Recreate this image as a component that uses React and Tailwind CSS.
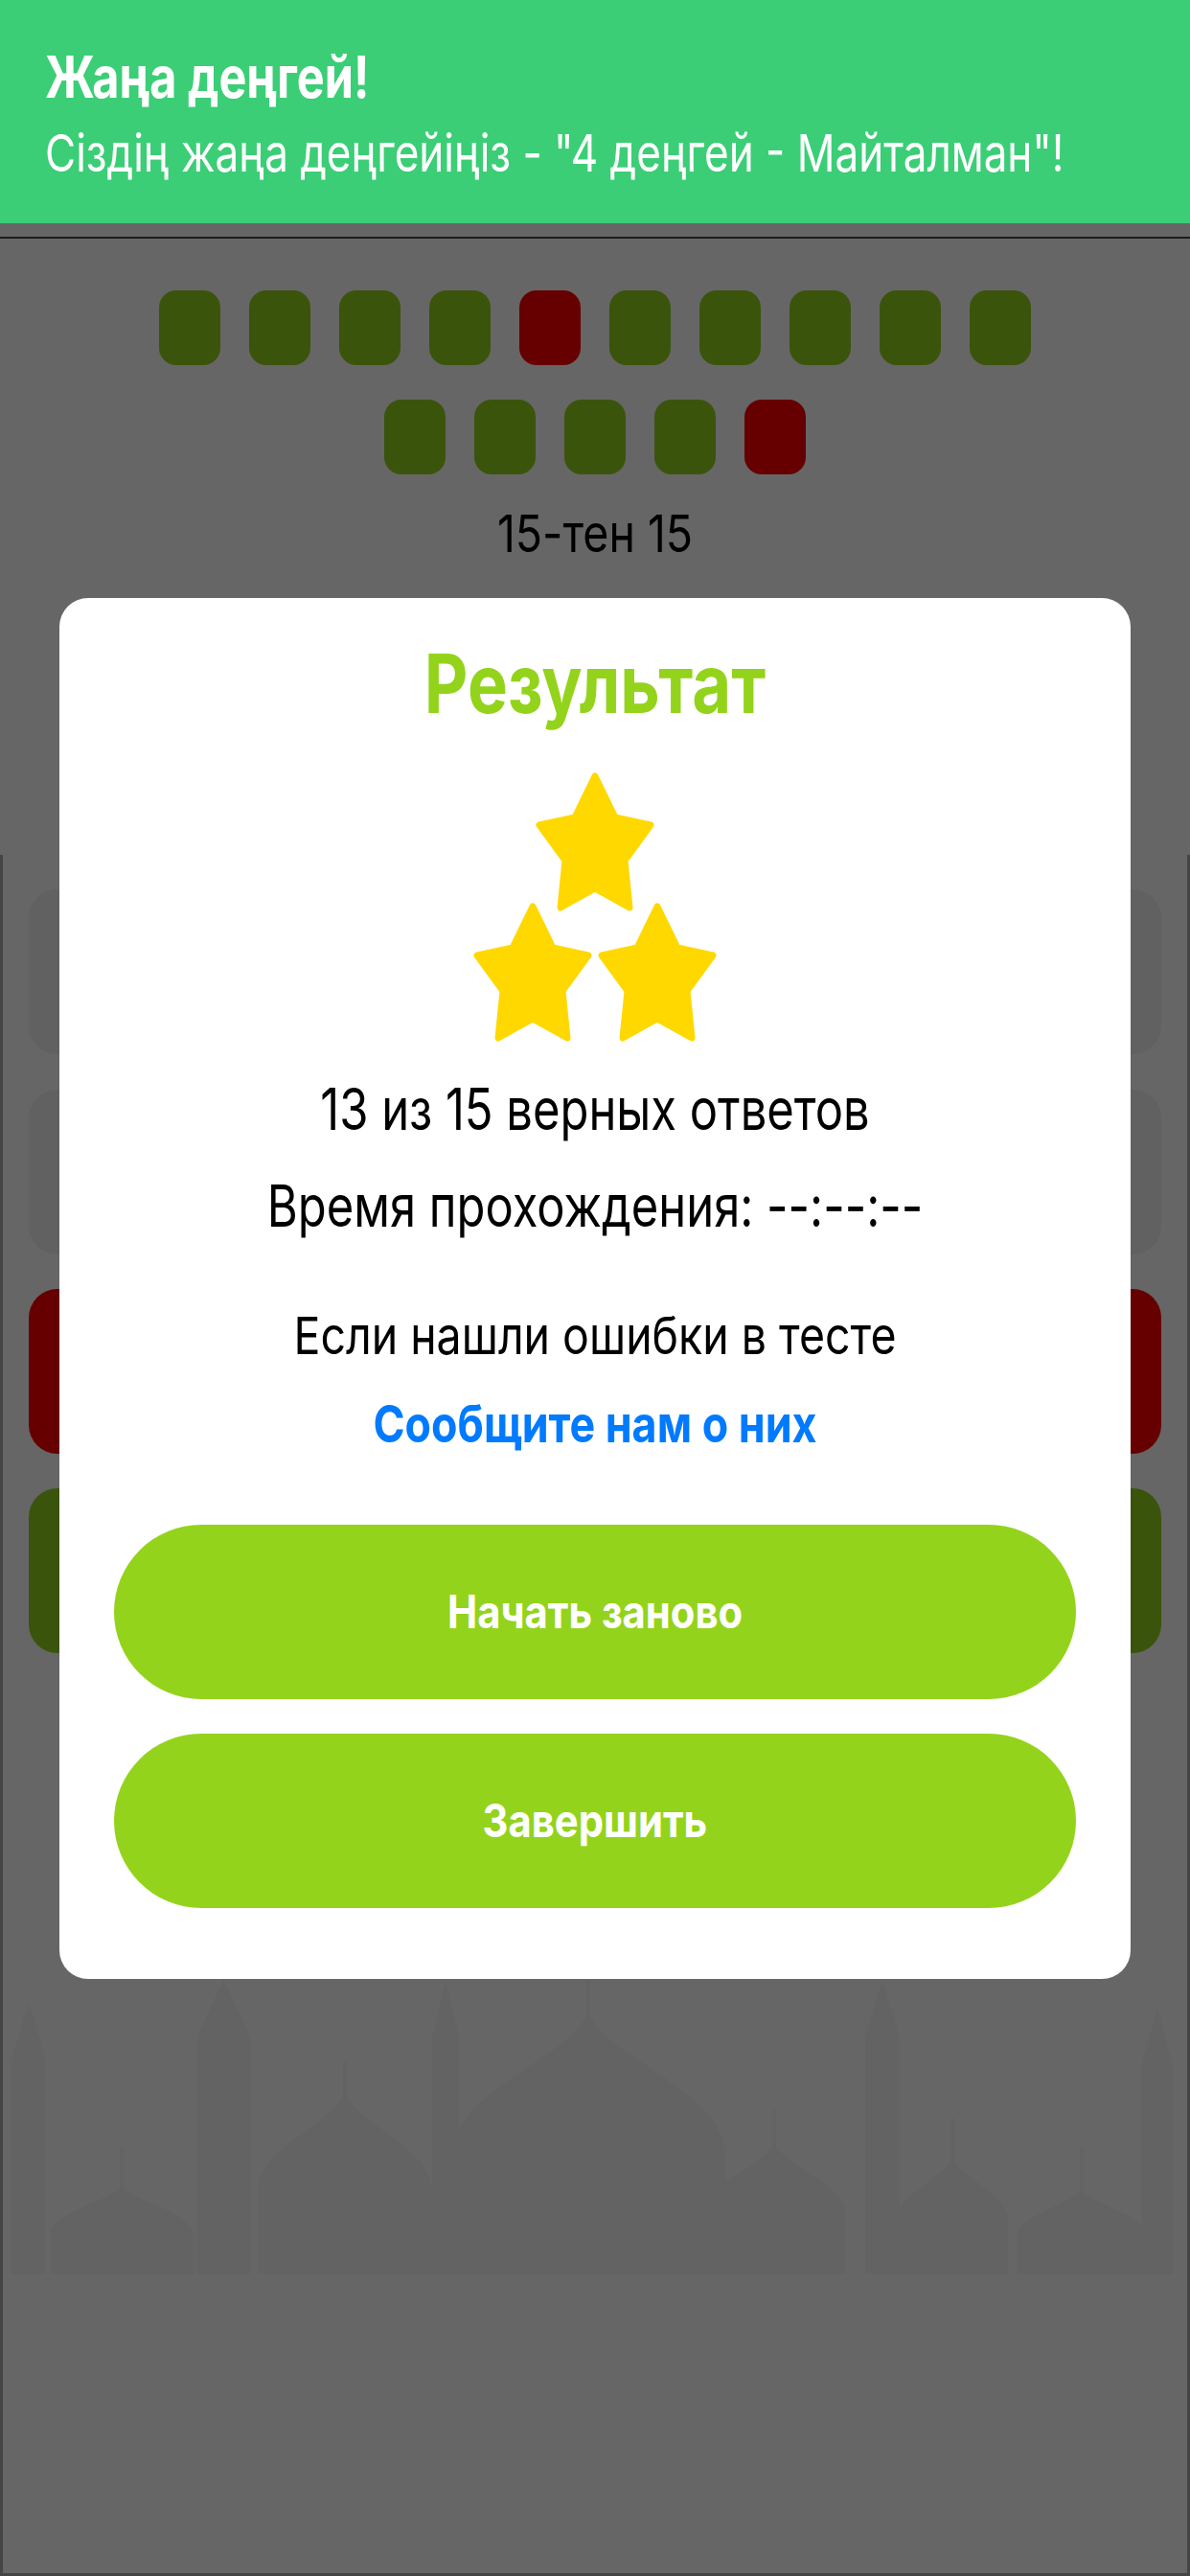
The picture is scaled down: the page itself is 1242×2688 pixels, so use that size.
import React from "react";

const G = "#3b540b";
const R = "#660000";
const row1 = [G, G, G, G, R, G, G, G, G, G];
const row2 = [G, G, G, G, R];

function Star() {
  return (
    <svg width="126" height="146" viewBox="0 0 126 146">
      <polygon
        points="63,4 84,47 121,55 94,92 99,141 63,121 27,141 32,92 5,55 42,47"
        fill="#FFD800"
        stroke="#FFD800"
        strokeWidth="7"
        strokeLinejoin="round"
      />
    </svg>
  );
}

function Dome({ cx, ay, w }) {
  const l = cx - w / 2;
  const r = cx + w / 2;
  const h = 2373 - ay;
  const shoulder = ay + h * 0.55;
  return (
    <path
      d={`M ${l} 2373 L ${l} ${shoulder} C ${l} ${ay + h * 0.3}, ${cx - w * 0.08} ${ay + h * 0.18}, ${cx} ${ay} C ${cx + w * 0.08} ${ay + h * 0.18}, ${r} ${ay + h * 0.3}, ${r} ${shoulder} L ${r} 2373 Z`}
    />
  );
}

function Minaret({ x, w, top }) {
  return (
    <path
      d={`M ${x} 2373 L ${x} ${top + 60} L ${x + w / 2} ${top} L ${x + w} ${top + 60} L ${x + w} 2373 Z`}
    />
  );
}

function Mosque() {
  return (
    <svg width="1236" height="307" viewBox="3 2066 1236 307" className="block">
      <g fill="#636363">
        <Minaret x={12} w={36} top={2090} />
        <Minaret x={206} w={55} top={2066} />
        <Minaret x={451} w={28} top={2066} />
        <Minaret x={903} w={36} top={2066} />
        <Minaret x={1192} w={32} top={2095} />
        <Dome cx={127} ay={2281} w={150} />
        <Dome cx={360} ay={2184} w={182} />
        <Dome cx={614} ay={2101} w={286} />
        <Dome cx={808} ay={2237} w={150} />
        <Dome cx={994} ay={2252} w={116} />
        <Dome cx={1129} ay={2285} w={136} />
        <rect x="612" y="2066" width="4" height="40" />
        <rect x="358" y="2150" width="4" height="40" />
        <rect x="125" y="2240" width="4" height="45" />
        <rect x="806" y="2200" width="4" height="40" />
        <rect x="992" y="2210" width="4" height="45" />
        <rect x="1127" y="2240" width="4" height="48" />
      </g>
    </svg>
  );
}

export default function App() {
  return (
    <div className="relative w-[1242px] h-[2688px] overflow-hidden bg-[#666666] font-['Inter',sans-serif]">
      <div className="flex flex-col h-full">
        {/* Notification header */}
        <div className="h-[233px] shrink-0 bg-[#3bce76] px-[47px] pt-[48px] text-white">
          <div className="text-[60px] leading-[64px] font-bold origin-left scale-x-[0.81] whitespace-nowrap">
            Жаңа деңгей!
          </div>
          <div className="mt-[16px] text-[54px] leading-[64px] font-normal origin-left scale-x-[0.815] whitespace-nowrap">
            Сіздің жаңа деңгейіңіз - "4 деңгей - Майталман"!
          </div>
        </div>
        <div className="h-[14px] shrink-0" />
        <div className="h-[2px] shrink-0 bg-[#1c1c1c]" />

        {/* Progress squares */}
        <div className="mt-[54px] flex justify-center gap-[30px]">
          {row1.map((c, i) => (
            <div key={i} className="w-[64px] h-[78px] rounded-[18px]" style={{ backgroundColor: c }} />
          ))}
        </div>
        <div className="mt-[36px] flex justify-center gap-[30px]">
          {row2.map((c, i) => (
            <div key={i} className="w-[64px] h-[78px] rounded-[18px]" style={{ backgroundColor: c }} />
          ))}
        </div>
        <div className="mt-[32px] text-center text-[54px] leading-[60px] text-black scale-x-[0.86]">
          15-тен 15
        </div>

        {/* Answers area */}
        <div className="mt-[305px] flex-1 flex flex-col border-x-[3px] border-b-[3px] border-[#454545]">
          <div className="px-[27px] pt-[36px] flex flex-col">
            <div className="h-[172px] rounded-[30px] bg-[#616161]" />
            <div className="mt-[37px] h-[172px] rounded-[30px] bg-[#616161]" />
            <div className="mt-[36px] h-[172px] rounded-[30px] bg-[#660000]" />
            <div className="mt-[36px] h-[172px] rounded-[30px] bg-[#3b540b]" />
          </div>
          <div className="mt-[341px]">
            <Mosque />
          </div>
        </div>
      </div>

      {/* Result modal */}
      <div className="absolute left-[62px] top-[624px] w-[1118px] rounded-[30px] bg-white px-[57px] pt-[40px] pb-[74px] flex flex-col items-center">
        <div className="w-full text-center text-[85px] leading-[100px] font-bold text-[#94d31c] scale-x-[0.83]">
          Результат
        </div>
        <div className="mt-[42px] flex flex-col items-center">
          <Star />
          <div className="-mt-[10px] flex gap-[4px]">
            <Star />
            <Star />
          </div>
        </div>
        <div className="mt-[29px] w-full text-center text-[60px] leading-[80px] text-black scale-x-[0.815]">
          13 из 15 верных ответов
        </div>
        <div className="mt-[21px] w-full text-center text-[60px] leading-[80px] text-black scale-x-[0.815]">
          Время прохождения: --:--:--
        </div>
        <div className="mt-[60px] w-full text-center text-[54px] leading-[72px] text-black scale-x-[0.86]">
          Если нашли ошибки в тесте
        </div>
        <div className="mt-[20px] w-full text-center text-[54px] leading-[72px] font-bold text-[#007aff] scale-x-[0.83]">
          Сообщите нам о них
        </div>
        <button className="mt-[69px] w-full h-[182px] rounded-full bg-[#94d31c] flex items-center justify-center">
          <span className="text-[48px] leading-[60px] font-bold text-white scale-x-[0.87]">Начать заново</span>
        </button>
        <button className="mt-[36px] w-full h-[182px] rounded-full bg-[#94d31c] flex items-center justify-center">
          <span className="text-[48px] leading-[60px] font-bold text-white scale-x-[0.87]">Завершить</span>
        </button>
      </div>
    </div>
  );
}
